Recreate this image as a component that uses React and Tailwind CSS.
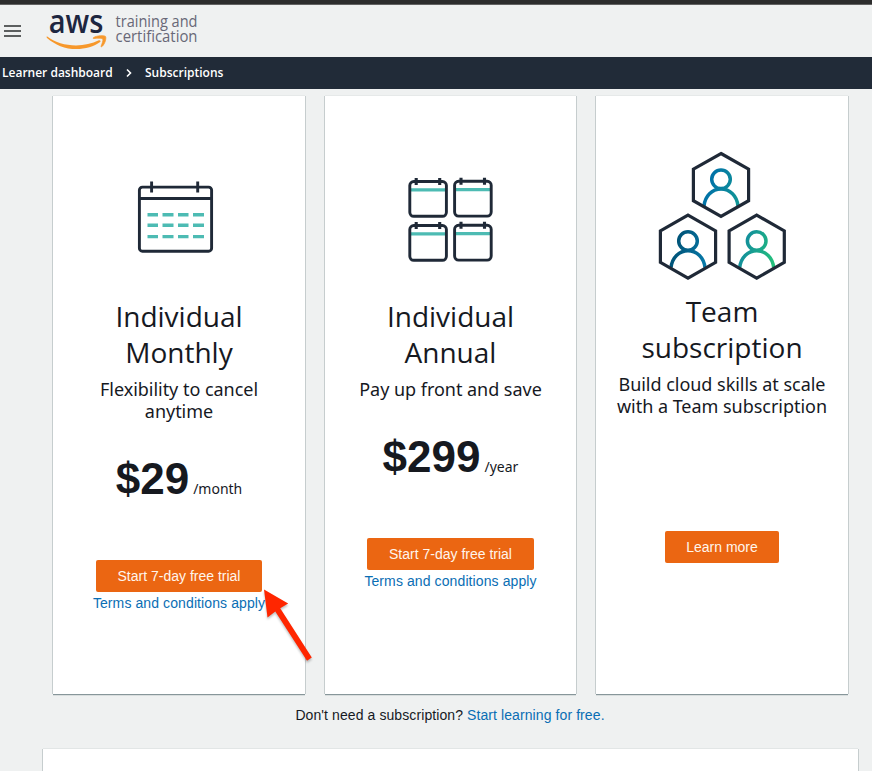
import React from 'react';

const INK = '#1f2937';
const TEAL = '#4dbbb3';

function Logo() {
  return (
    <svg width="160" height="52" viewBox="44 5 160 52" className="block overflow-visible">
      <text x="48.700" y="32.700" fontFamily="'Open Sans', 'Noto Sans', sans-serif" fontWeight="600" fontSize="33" textLength="54.600" lengthAdjust="spacingAndGlyphs" fill="#1d2640">aws</text>
      <path d="M47.600 36.800c7.600 5.700 17.400 8.600 28.400 8.600 8.200 0 16.200-1.900 22.800-5.100 1.400-.6 2.500 .8 1.300 1.800-5.700 4.600-15 7-23.500 7-11.600 0-21.700-4.400-29.600-11.200-.9-.9-.3-1.700 .6-1.100z" fill="#f7982b" />
      <path d="M93.300 37.700c3.300-2.300 11.200-2.500 12.200-1.300 1 1.300-.2 7.200-3.500 10.200-.6 .5-1.200 .2-.9-.5 .8-1.900 2.300-6 1.700-7.100-.7-1.100-6.300-.8-8.900-.5-.8 .1-1.200-.4-.6-.8z" fill="#f7982b" stroke="#f7982b" strokeWidth=".7" />
      <text x="115.500" y="26.500" fontFamily="'Open Sans', 'Noto Sans', sans-serif" fontSize="15.500" textLength="82" lengthAdjust="spacingAndGlyphs" fill="#686877">training and</text>
      <text x="115.500" y="41.500" fontFamily="'Open Sans', 'Noto Sans', sans-serif" fontSize="15.500" textLength="82" lengthAdjust="spacingAndGlyphs" fill="#686877">certification</text>
    </svg>
  );
}

function MonthIcon() {
  return (
    <svg viewBox="53 96 252 203" className="block h-[203px] w-[252px] shrink-0" fill="none">
      <rect x="139.400" y="187.100" width="72.200" height="64.100" rx="3" stroke={INK} strokeWidth="2.900" />
      <path d="M140 198.500h71M151.600 181.500v11M197.700 181.500v11" stroke={INK} strokeWidth="2.900" />
      {[214.700, 225.200, 236.600].map((y) => (
        <path key={y} d={`M147.500 ${y}h10.500m4.500 0h11m4.500 0h10.500m4.500 0h11`} stroke={TEAL} strokeWidth="3.400" />
      ))}
    </svg>
  );
}

function YearIcon() {
  const months = [[409.800, 181.500], [454.600, 181.300], [409.800, 225.500], [454.600, 225.300]];
  return (
    <svg viewBox="325 96 252 203" className="block h-[203px] w-[252px] shrink-0" fill="none">
      {months.map(([x, y]) => (
        <g key={`${x}-${y}`}>
          <path d={`M${x} ${y + 8.300}h36.600`} stroke={TEAL} strokeWidth="3.200" />
          <rect x={x} y={y} width="36.600" height="34.800" rx="4" stroke={INK} strokeWidth="2.900" />
          <path d={`M${x + 6.400} ${y - 3.500}v7m23.500-7v7`} stroke={INK} strokeWidth="3.100" />
        </g>
      ))}
    </svg>
  );
}

function Member({ x, y, id, from, to }) {
  return (
    <g transform={`translate(${x} ${y})`}>
      <defs>
        <linearGradient id={id} gradientUnits="userSpaceOnUse" x1="-14" y1="0" x2="18" y2="10">
          <stop stopColor={from} />
          <stop offset="1" stopColor={to} />
        </linearGradient>
      </defs>
      <circle cx="0" cy="-5.700" r="9.300" stroke={`url(#${id})`} strokeWidth="3.500" />
      <path d="M-17 21C-16 11-9 4 0 4S16 11 17 21" stroke={`url(#${id})`} strokeWidth="3.500" />
      <path d="M0-31.500 27.600-15.800V15.700L0 31.500-27.600 15.700V-15.800Z" stroke={INK} strokeWidth="3.200" />
    </g>
  );
}

function TeamIcon() {
  return (
    <svg viewBox="596 96 252 198" className="block h-[198px] w-[252px] shrink-0" fill="none">
      <Member x={721} y={185} id="member-top" from="#0070a8" to="#119597" />
      <Member x={688} y={246.700} id="member-left" from="#005276" to="#0779a8" />
      <Member x={756.700} y={246.700} id="member-right" from="#128e9c" to="#24bf7c" />
    </svg>
  );
}

function PlanCard({ icon, title, lines, price, period, action, terms, gap, width }) {
  return (
    <article className={`${width} flex h-[598px] flex-col items-center bg-white text-center shadow-[-1px_0_0_0_#c6cdce,1px_0_0_0_#c6cdce,0_1px_0_0_#87969a,0_2px_0_0_#d9dede,0_-1px_0_0_#e6e9e9]`}>
      {icon}
      <h2 className="-mt-px font-['Open_Sans','Noto_Sans',sans-serif] text-[28px] leading-9 text-[#16191f]">
        {title.map((t) => <span key={t} className="block">{t}</span>)}
      </h2>
      <p className="mt-2 text-lg leading-[22px] tracking-[-0.03px] text-[#16191f]">
        {lines.map((t) => <span key={t} className="block whitespace-nowrap">{t}</span>)}
      </p>
      {price && (
        <p className="mt-[31px] flex h-[52px] items-baseline gap-1 text-[#16191f]">
          <span className="font-['Liberation_Sans',Arial,sans-serif] text-[44px] leading-[52px] font-bold">{price}</span>
          <span className="text-sm">{period}</span>
        </p>
      )}
      <button className={`${gap} h-8 rounded-[2px] bg-[#eb6612] font-['Liberation_Sans',Arial,sans-serif] text-sm whitespace-nowrap text-[#fff5ec]`}>{action}</button>
      {terms && <a className="font-['Liberation_Sans',Arial,sans-serif] text-sm leading-[22px] tracking-[0.1px] text-[#0a6eb4]">{terms}</a>}
    </article>
  );
}

export default function App() {
  return (
    <div className="relative flex h-[771px] w-[872px] flex-col overflow-hidden bg-[#eff1f1] font-['Noto_Sans','Open_Sans',sans-serif]">
      <div className="h-[5px] shrink-0 border-b border-[#626262] bg-[#2d2d2d]" />
      <header className="flex h-[52px] shrink-0 items-start pl-1">
        <div className="mt-5 flex w-[17px] flex-col gap-[3px]">
          <span className="h-0.5 bg-[#5c5f5f]" />
          <span className="h-0.5 bg-[#5c5f5f]" />
          <span className="h-0.5 bg-[#5c5f5f]" />
        </div>
        <div className="ml-[23px]"><Logo /></div>
      </header>
      <nav className="flex h-8 shrink-0 items-center bg-[#212b38] pl-0.5 font-['Open_Sans','Noto_Sans',sans-serif] text-xs font-semibold text-white">
        <span className="w-[111px] whitespace-nowrap">Learner dashboard</span>
        <svg className="mx-3 shrink-0" width="8" height="10" viewBox="0 0 8 10" fill="none"><path d="M2 1.500 5.500 5 2 8.500" stroke="white" strokeWidth="1.600" /></svg>
        <span>Subscriptions</span>
      </nav>
      <main className="flex flex-col pt-[7px]">
        <section className="ml-[53px] flex">
          <PlanCard width="w-[252px]" icon={<MonthIcon />} title={['Individual', 'Monthly']} lines={['Flexibility to cancel', 'anytime']} price="$29" period="/month" action="Start 7-day free trial" terms="Terms and conditions apply" gap="mt-[55px] w-[166px]" />
          <div className="w-5" />
          <PlanCard width="w-[251px]" icon={<YearIcon />} title={['Individual', 'Annual']} lines={['Pay up front and save']} price="$299" period="/year" action="Start 7-day free trial" terms="Terms and conditions apply" gap="mt-[55px] w-[167px]" />
          <div className="w-5" />
          <PlanCard width="w-[252px]" icon={<TeamIcon />} title={['Team', 'subscription']} lines={['Build cloud skills at scale', 'with a Team subscription']} action="Learn more" gap="mt-[114px] w-[114px]" />
        </section>
        <p className="mt-[11px] ml-7 text-center font-['Liberation_Sans',Arial,sans-serif] text-sm leading-5 tracking-[0.09px] text-[#16191f]">
          Don't need a subscription? <a className="text-[#0a6eb4]">Start learning for free.</a>
        </p>
        <section className="mt-6 ml-[43px] h-16 w-[815px] bg-white shadow-[-1px_0_0_0_#c6cdce,1px_0_0_0_#c6cdce,0_-1px_0_0_#e2e6e6]" />
      </main>
      <svg className="absolute top-[580px] left-[255px] drop-shadow-[0_2px_1px_rgba(0,0,0,0.25)]" width="70" height="95" viewBox="255 580 70 95">
        <path d="M264 589.500 288.200 603.500 280.200 608.200 311.800 657.500 307 660.800 275.300 611.500 267.500 617.500Z" fill="#ff2600" />
      </svg>
    </div>
  );
}
